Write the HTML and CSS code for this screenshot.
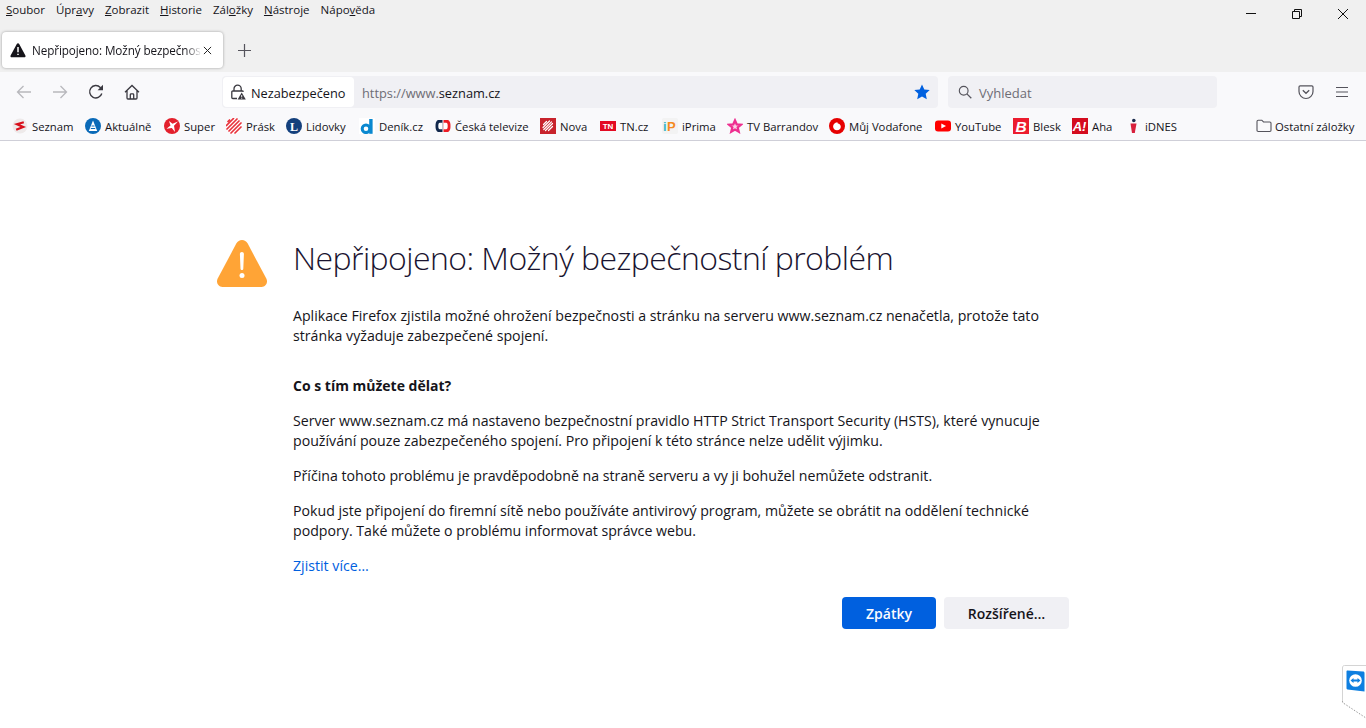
FILE: index.html
```html
<!DOCTYPE html>
<html lang="cs">
<head>
<meta charset="utf-8">
<title>Nepřipojeno: Možný bezpečnostní problém</title>
<link rel="stylesheet" href="styles.css">
</head>
<body>
<header class="chrome">
  <div class="titlebar">
    <nav class="menu">
      <span><u>S</u>oubor</span><span>Úpr<u>a</u>vy</span><span><u>Z</u>obrazit</span><span><u>H</u>istorie</span><span>Zál<u>o</u>žky</span><span><u>N</u>ástroje</span><span>Nápo<u>v</u>ěda</span>
    </nav>
    <div class="winctl">
      <svg class="ic" viewBox="0 0 12 12"><path d="M1 5.500h10" stroke="#111" fill="none"/></svg>
      <svg class="ic" viewBox="0 0 12 12"><path d="M1.500 3.500h7v7h-7zM3.500 3.500v-2h7v7h-2" stroke="#111" fill="none"/></svg>
      <svg class="ic" viewBox="0 0 12 12"><path d="M1 1l10 10M11 1L1 11" stroke="#111" fill="none"/></svg>
    </div>
  </div>
  <div class="tabstrip">
    <div class="tab">
      <svg class="tabwarn" viewBox="0 0 16 16"><path d="M8 1.200c.5 0 .9.3 1.200.8l6.200 11.400c.5.9-.1 1.800-1.100 1.800H1.700c-1 0-1.600-.9-1.100-1.800L6.800 2c.3-.5.7-.8 1.200-.8z" fill="#15141a"/><path d="M8 5v5.200M8 11.700v1.300" stroke="#fff" stroke-width="1.500"/></svg>
      <span class="tabtitle">Nepřipojeno: Možný bezpečnostní problém</span>
      <svg class="tabclose" viewBox="0 0 10 10"><path d="M1 1l8 8M9 1L1 9" stroke="#222" stroke-width="1.100" fill="none"/></svg>
    </div>
    <svg class="newtab" viewBox="0 0 14 14"><path d="M7 0v14M0 7h14" stroke="#55545c" stroke-width="1.300" fill="none"/></svg>
  </div>
  <div class="toolbar">
    <div class="navbtns">
      <svg class="nav" viewBox="0 0 16 16"><path d="M15 8H1.500M7.500 2L1.500 8l6 6" stroke="#b8b8bc" stroke-width="1.300" fill="none"/></svg>
      <svg class="nav" viewBox="0 0 16 16"><path d="M1 8h13.500M8.500 2l6 6-6 6" stroke="#b8b8bc" stroke-width="1.300" fill="none"/></svg>
      <svg class="nav" viewBox="0 0 16 16"><path d="M13.800 9.500A6.200 6.200 0 1 1 12.300 3.400L14.500 5.500" stroke="#3a3940" stroke-width="1.400" fill="none"/><path d="M15 .8v5.400H9.600z" fill="#3a3940"/></svg>
      <svg class="nav" viewBox="0 0 16 16"><path d="M1 8.200L8 1.500l7 6.700M3 6.500V14c0 .6.400 1 1 1h8c.6 0 1-.4 1-1V6.500M6.300 15v-4.300c0-.5.300-.8.800-.8h1.800c.5 0 .8.300.8.800V15" stroke="#3a3940" stroke-width="1.300" fill="none"/></svg>
    </div>
    <div class="urlbar">
      <div class="chip">
        <svg class="lock" viewBox="0 0 16 16"><path d="M4 7V4.800a3.600 3.600 0 0 1 7.200 0V7M7 14.500H2.800c-.6 0-1-.4-1-1V8c0-.6.400-1 1-1h9.500c.5 0 .9.300 1 .8" stroke="#3a3940" stroke-width="1.300" fill="none"/><path d="M11.700 8.500l4.100 7H7.600z" fill="#3a3940"/><path d="M11.700 11v2.300M11.700 13.900v.8" stroke="#fff" stroke-width=".9"/></svg>
        <span class="lift">Nezabezpečeno</span>
      </div>
      <div class="url lift"><span class="dim">https://www.</span>seznam.cz</div>
      <svg class="star" viewBox="0 0 16 16"><path d="M8 .5l2.300 5 5.400.6-4 3.700 1.100 5.400L8 12.500l-4.800 2.700 1.100-5.400-4-3.700 5.400-.6z" fill="#0060df"/></svg>
    </div>
    <div class="search">
      <svg class="mag" viewBox="0 0 16 16"><circle cx="6.500" cy="6.500" r="5" stroke="#55545c" stroke-width="1.300" fill="none"/><path d="M10.200 10.200l5 5" stroke="#55545c" stroke-width="1.400"/></svg>
      <span class="lift">Vyhledat</span>
    </div>
    <div class="rightbtns">
      <svg class="pocket" viewBox="0 0 16 16"><path d="M2.200 1.800h11.600c.7 0 1.200.5 1.200 1.200v4.500a7 7 0 0 1-14 0V3c0-.7.500-1.200 1.200-1.200z" stroke="#55545c" stroke-width="1.200" fill="none"/><path d="M4.800 6.300L8 9.300l3.200-3" stroke="#55545c" stroke-width="1.300" fill="none"/></svg>
      <svg class="burger" viewBox="0 0 14 12"><path d="M1 1.500h12M1 6h12M1 10.500h12" stroke="#55545c" stroke-width="1.200" fill="none"/></svg>
    </div>
  </div>
  <div class="bookmarks">
    <a class="bm"><svg viewBox="0 0 16 16"><circle cx="8" cy="8" r="7.500" fill="#eeeaea"/><path d="M11.800 4.300L5 6.300l6.200 2.700-7 2.800" stroke="#d8101c" stroke-width="2.200" fill="none"/></svg>Seznam</a>
    <a class="bm"><svg viewBox="0 0 16 16"><circle cx="8" cy="8" r="8" fill="#0a6ab8"/><path d="M8 2.500l4.200 10.500H3.800z" fill="#fff"/><path d="M6.500 8h3M5.800 10.500h4.400" stroke="#0a6ab8" stroke-width="1.100"/></svg>Aktuálně</a>
    <a class="bm"><svg viewBox="0 0 16 16"><circle cx="8" cy="8" r="8" fill="#e3202c"/><path d="M14 3.500L10 7.800 11 14 7.800 10 2.500 10.800l4-3.300L5 3l3.500 2.800z" fill="#fff"/></svg>Super</a>
    <a class="bm"><svg viewBox="0 0 16 16"><circle cx="8" cy="8" r="8" fill="#fff"/><path d="M2 3.500L3.500 2M.5 7.500L7.500.5M1 11L11 1M3 13L13 3M5 15L15 5M9 15l6-6" stroke="#e8323c" stroke-width="1.700" stroke-linecap="round"/></svg>Prásk</a>
    <a class="bm"><svg viewBox="0 0 16 16"><circle cx="8" cy="8" r="8" fill="#14407c"/><text class="glyph serif" x="8" y="12.500" font-size="12" fill="#fff" text-anchor="middle">L</text></svg>Lidovky</a>
    <a class="bm bm-d"><svg viewBox="0 0 16 16"><rect width="16" height="16" fill="#fff"/><circle cx="7" cy="10.800" r="3.800" fill="none" stroke="#0a88d0" stroke-width="3"/><rect x="10.200" y="1" width="3.400" height="14.800" fill="#0a88d0"/></svg>Deník.cz</a>
    <a class="bm"><svg viewBox="0 0 16 16"><path d="M7.500 2H4C1.800 2 .5 3.800.5 8s1.300 6 3.500 6h3.500z" fill="#12284c"/><path d="M8.500 2H12c2.200 0 3.500 1.800 3.500 6s-1.300 6-3.500 6H8.500z" fill="#ed1c24"/><path d="M4.800 4.800h2.700v6.400H4.800c-1 0-1.500-1-1.500-3.200s.5-3.200 1.500-3.200zM8.500 4.800h2.700c1 0 1.500 1 1.500 3.200s-.5 3.200-1.500 3.200H8.500z" fill="#fff"/></svg>Česká televize</a>
    <a class="bm"><svg viewBox="0 0 16 16"><rect width="16" height="16" fill="#c8232c"/><path d="M3.500 6.500l3-3M3 9.500L9.500 3M3.800 11.500l7.700-7.700M5.500 12.500l7-7M8.500 12.500l4-4" stroke="#fff" stroke-width="1.200" stroke-linecap="round"/></svg>Nova</a>
    <a class="bm"><svg viewBox="0 0 16 16"><rect y="3" width="16" height="10" fill="#e30b23"/><text class="glyph bold" x="8" y="11" font-size="8" fill="#fff" text-anchor="middle">TN</text></svg>TN.cz</a>
    <a class="bm bm-d"><svg viewBox="0 0 16 16"><rect width="16" height="16" rx="2" fill="#f3f3f3"/><text class="glyph bold" x="1" y="13" font-size="13" fill="#3fb6c6">i</text><text class="glyph bold" x="5" y="13" font-size="13" fill="#f58a1f">P</text></svg>iPrima</a>
    <a class="bm"><svg viewBox="0 0 16 16"><path d="M8 2.500l1.700 3.800 4.200.4-3.200 2.800 1 4.100L8 11.500l-3.700 2.100 1-4.100-3.200-2.800 4.200-.4z" fill="#fbd3e6" stroke="#ee2f90" stroke-width="2.300"/></svg>TV Barrandov</a>
    <a class="bm"><svg viewBox="0 0 16 16"><circle cx="8" cy="8" r="8" fill="#e60000"/><path d="M8.300 4.200c-2.600.5-4.200 2-4.200 4.200s1.700 3.800 3.900 3.800 3.800-1.400 3.800-3.500-1.400-3-3-3.300c-.2-.5-.3-.9-.5-1.200z" fill="#fff"/></svg>Můj Vodafone</a>
    <a class="bm"><svg viewBox="0 0 16 16"><rect y="2.500" width="16" height="11" rx="3" fill="#f00"/><path d="M6.300 5.500L11 8l-4.700 2.500z" fill="#fff"/></svg>YouTube</a>
    <a class="bm"><svg viewBox="0 0 16 16"><rect width="16" height="16" fill="#ec1c2e"/><text class="glyph bold italic" x="8" y="14" font-size="15.500" fill="#fff" text-anchor="middle">B</text></svg>Blesk</a>
    <a class="bm"><svg viewBox="0 0 16 16"><rect width="16" height="16" fill="#d40c1e"/><text class="glyph bold italic" x="7.500" y="13" font-size="13" fill="#fff" text-anchor="middle">A!</text></svg>Aha</a>
    <a class="bm"><svg viewBox="0 0 16 16"><circle cx="8.800" cy="2.500" r="1.800" fill="#1c2c4c"/><path d="M5.500 5.500h6L9.800 15H7z" fill="#d8203c"/></svg>iDNES</a>
    <a class="bm bm-other"><svg viewBox="0 0 16 16"><path d="M1 3.500c0-.8.500-1.300 1.200-1.300h3.600l1.700 1.800h6.300c.7 0 1.200.5 1.200 1.200v7.100c0 .7-.5 1.200-1.200 1.200H2.200c-.7 0-1.200-.5-1.200-1.200z" fill="none" stroke="#55545c" stroke-width="1.100"/></svg>Ostatní záložky</a>
  </div>
</header>
<main class="page">
  <svg class="bigwarn" viewBox="1 1 50 47"><path d="M26 1c2.500 0 4.300 1.200 5.700 3.600l18.600 35c2 3.800-.4 8.400-4.700 8.400H6.400c-4.300 0-6.700-4.600-4.700-8.400l18.600-35C21.700 2.200 23.500 1 26 1z" fill="#ffa436"/><path d="M25.900 13c1.300 0 2.100.9 2 2.200l-.6 14.600c0 .8-.6 1.300-1.400 1.300s-1.300-.5-1.400-1.300l-.6-14.600c-.1-1.300.7-2.200 2-2.200z" fill="#fff"/><circle cx="26" cy="36.500" r="2.500" fill="#fff"/></svg>
  <article class="content">
    <h1>Nepřipojeno: Možný bezpečnostní problém</h1>
    <p class="intro">Aplikace Firefox zjistila možné ohrožení bezpečnosti a stránku na serveru www.seznam.cz nenačetla, protože tato stránka vyžaduje zabezpečené spojení.</p>
    <h2>Co s tím můžete dělat?</h2>
    <p>Server www.seznam.cz má nastaveno bezpečnostní pravidlo HTTP Strict Transport Security (HSTS), které vynucuje používání pouze zabezpečeného spojení. Pro připojení k této stránce nelze udělit výjimku.</p>
    <p>Příčina tohoto problému je pravděpodobně na straně serveru a vy ji bohužel nemůžete odstranit.</p>
    <p>Pokud jste připojení do firemní sítě nebo používáte antivirový program, můžete se obrátit na oddělení technické podpory. Také můžete o problému informovat správce webu.</p>
    <p><a class="more">Zjistit více…</a></p>
    <div class="actions">
      <button class="btn primary">Zpátky</button>
      <button class="btn">Rozšířené…</button>
    </div>
  </article>
</main>
<aside class="tv">
  <svg viewBox="0 0 25 56"><path d="M25 1.500H3.500C2 1.500 1.500 2.500 1.500 4v33c0 1.500.3 2 1.500 2.500L25 54V1.500" fill="#fff"/><path d="M25 1.500H3.500C2 1.500 1.500 2.500 1.500 4v33" fill="none" stroke="#d4d4d4"/><path d="M1.500 37c0 1.500.3 2 1.500 2.500L25 54" fill="none" stroke="#999" stroke-dasharray="1.500 1.500"/><path d="M6.500 6.500l15.500 1c1 0 1.500.7 1.500 1.500v18.500L6.500 25.500c-.7-.1-1-.5-1-1.200V7.500c0-.7.400-1 1-1z" fill="#0e7fe0"/><circle cx="14.500" cy="16.500" r="6.300" fill="#fff"/><path d="M9.500 16.500l3-2.500v1.500h4V14l3 2.500-3 2.500v-1.500h-4V19z" fill="#0e7fe0"/></svg>
</aside>
</body>
</html>
```
FILE: styles.css
```css
* { box-sizing: border-box; }
html, body { margin: 0; padding: 0; }
body {
  width: 1366px;
  height: 728px;
  overflow: hidden;
  position: relative;
  background: #fff;
  color: #15141a;
  font-family: "Open Sans", "Noto Sans", sans-serif;
}
svg { display: block; flex: none; }

.chrome { background: #f0f0f0; }
.titlebar { height: 32px; display: flex; justify-content: space-between; }
.menu { display: flex; gap: 11px; padding: 2px 0 0 6px; font-size: 11.500px; line-height: 16px; color: #15141a; }
.menu u { text-decoration-skip-ink: none; }
.winctl { display: flex; gap: 34px; padding: 8px 17px 0 0; }
.ic { width: 12px; height: 12px; }

.tabstrip { height: 40px; display: flex; align-items: flex-start; padding-left: 2px; }
.tab {
  width: 221px; height: 36px; background: #fff; border-radius: 4px;
  box-shadow: 0 0 3px rgba(0,0,0,.35);
  display: flex; align-items: center; padding: 0 11px 0 8px;
}
.tabwarn { width: 16px; height: 16px; }
.tabtitle {
  flex: 1; min-width: 0; margin-left: 6px; white-space: nowrap; overflow: hidden;
  font-size: 11.700px; letter-spacing: -.1px; line-height: 16px;
  -webkit-mask-image: linear-gradient(to right, #000 90%, transparent 100%);
  mask-image: linear-gradient(to right, #000 90%, transparent 100%);
}
.tabclose { width: 9px; height: 9px; margin-left: 1px; }
.newtab { width: 13px; height: 13px; margin: 12px 0 0 15px; }

.toolbar { height: 40px; background: #f9f9fb; display: flex; align-items: center; padding-left: 16px; }
.navbtns { display: flex; gap: 20px; width: 206px; }
.nav { width: 16px; height: 16px; }
.urlbar { width: 716px; height: 32px; background: #f0f0f4; border-radius: 4px; display: flex; align-items: center; padding-left: 1px; padding-right: 8px; }
.chip { width: 131px; height: 30px; background: #fff; border-radius: 4px; display: flex; align-items: center; gap: 5px; padding-left: 7px; font-size: 12.750px; }
.lift { padding-top: 2px; }
.lock { width: 16px; height: 16px; }
.url { flex: 1; padding-left: 8px; font-size: 12.800px; color: #15141a; }
.dim { color: #6e6d74; }
.star { width: 16px; height: 16px; }
.search { width: 269px; height: 32px; margin-left: 10px; background: #f0f0f4; border-radius: 4px; display: flex; align-items: center; gap: 7px; padding-left: 10px; font-size: 13px; color: #6e6d74; }
.mag { width: 14px; height: 14px; }
.rightbtns { display: flex; align-items: center; gap: 21px; margin-left: 81px; }
.pocket { width: 16px; height: 16px; }
.burger { width: 14px; height: 12px; }

.bookmarks {
  height: 29px; background: #f9f9fb; border-bottom: 1px solid #cfcfd8;
  display: grid; align-items: center; padding-left: 12px;
  grid-template-columns: 73px 79px 62px 60px 73px 76px 105px 60px 62px 65px 102px 106px 78px 59px 53px 131px 110px;
  font-size: 11.300px;
}
.bm { display: flex; align-items: center; gap: 4px; white-space: nowrap; color: #15141a; }
.bm svg { width: 16px; height: 16px; }
.bm-other { gap: 3px; }
.glyph { font-family: "Liberation Sans", sans-serif; }
.serif { font-family: "Liberation Serif", serif; font-weight: 700; }
.bold { font-weight: 700; }
.italic { font-style: italic; }

.page { display: flex; padding: 97px 0 0 217px; }
.bigwarn { width: 50px; height: 47px; margin: 2px 26px 0 0; }
.content { width: 776px; font-size: 14.170px; line-height: 20px; color: #15141a; }
h1 { margin: 0; font-size: 32px; font-weight: 300; letter-spacing: -.56px; line-height: 40px; color: #1a1430; }
p { margin: 0 0 15px; }
.intro { margin-top: 28px; margin-bottom: 30px; }
h2 { margin: 0 0 15px; font-size: 14px; line-height: 20px; font-weight: 700; }
.more { color: #0060df; }
.actions { display: flex; justify-content: flex-end; gap: 8px; margin-top: 21px; }
.btn { height: 32px; border: 0; border-radius: 4px; background: #f0f0f4; color: #15141a; font: 600 14px "Open Sans", sans-serif; width: 125px; }
.primary { background: #0060df; color: #fbfbfe; width: 94px; }

.tv { position: absolute; right: 0; top: 664px; width: 25px; height: 56px; }
.tv svg { width: 25px; height: 56px; }
```
